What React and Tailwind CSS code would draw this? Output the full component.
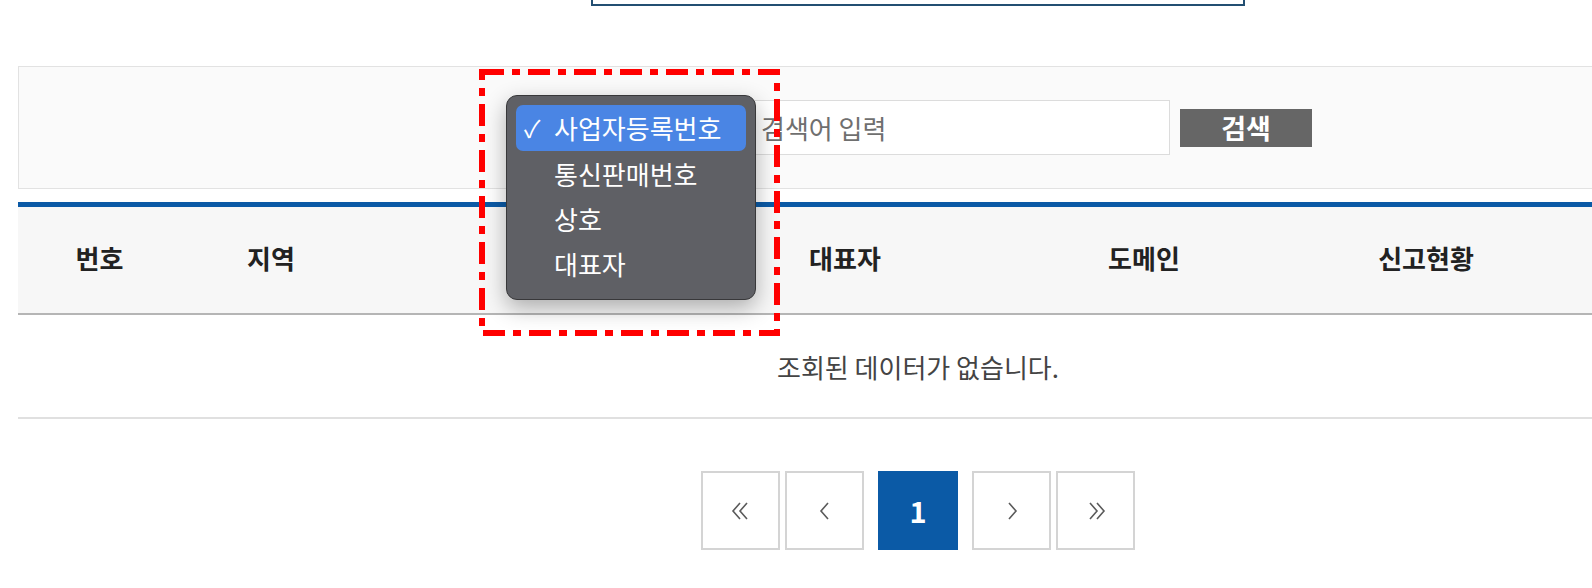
import React from "react"

const font = { fontFamily: '"Noto Sans CJK KR", "Noto Sans", sans-serif' }

const columns = [
  { label: "번호", w: "w-[163px]" },
  { label: "지역", w: "w-[180px]" },
  { label: "상호", w: "w-[355px]" },
  { label: "대표자", w: "w-[258px]" },
  { label: "도메인", w: "w-[340px]" },
  { label: "신고현황", w: "w-[224px]" },
  { label: "", w: "w-[280px]" },
]

const options = ["사업자등록번호", "통신판매번호", "상호", "대표자"]

function PageButton({ children, active }) {
  return (
    <button
      className={
        active
          ? "w-[80px] h-[79px] flex items-center justify-center bg-[#0b5aa6] text-white text-[29px] font-semibold"
          : "w-[79px] h-[79px] flex items-center justify-center border-2 border-[#d4d4d4] bg-white"
      }
    >
      {children}
    </button>
  )
}

function Chevron({ dir = "left", double }) {
  return (
    <svg width="28" height="26" viewBox="0 0 28 26" fill="none" stroke="#5a5a5a" strokeWidth="1.6">
      {double ? (
        <>
          <path d={dir === "left" ? "M13 5 L6 13 L13 21" : "M8 5 L15 13 L8 21"} />
          <path d={dir === "left" ? "M20 5 L13 13 L20 21" : "M15 5 L22 13 L15 21"} />
        </>
      ) : (
        <path d={dir === "left" ? "M17 5 L10 13 L17 21" : "M11 5 L18 13 L11 21"} />
      )}
    </svg>
  )
}

function Dropdown() {
  return (
    <div className="absolute left-[-18px] top-[-5px] w-[250px] h-[205px] rounded-[11px] bg-[#5f6065] border border-[#38383a] shadow-[0_8px_22px_rgba(0,0,0,0.3)] px-[9px] pt-[9px] flex flex-col">
      {options.map((o, i) => (
        <div
          key={o}
          className={
            i === 0
              ? "h-[46px] shrink-0 rounded-[7px] bg-[#4a85e4] flex items-center text-white text-[26px]"
              : "h-[45px] shrink-0 flex items-center text-white text-[26px]"
          }
        >
          <span className="w-[38px] pl-[8px] text-[24px] leading-none">{i === 0 ? "✓" : ""}</span>
          <span className="leading-none">{o}</span>
        </div>
      ))}
    </div>
  )
}

export default function App() {
  return (
    <div className="relative w-full h-[588px] overflow-hidden bg-white" style={font}>
      <div className="ml-[591px] w-[654px] h-[6px] border-2 border-t-0 border-[#234f72]" />

      <div className="ml-[18px] w-[1800px] mt-[60px]">
        <div className="h-[123px] border border-[#e2e2e2] bg-[#fafafa] flex items-center justify-center gap-[10px]">
          <div className="relative w-[217px] h-[55px]">
            <div className="w-full h-full border border-[#dcdcdc] bg-white" />
            <Dropdown />
          </div>
          <div className="w-[419px] h-[55px] border border-[#dcdcdc] bg-white flex items-center pl-[9px] text-[26px] text-[#6f6f6f]">
            검색어 입력
          </div>
          <button className="w-[132px] h-[38px] bg-[#666666] text-white text-[27px] font-semibold leading-none">검색</button>
        </div>

        <div className="mt-[13px] border-t-[5px] border-[#0b5aa6]">
          <div className="h-[108px] bg-[#f7f7f7] border-b-2 border-[#b5b5b5] flex">
            {columns.map((c, i) => (
              <div key={i} className={`${c.w} flex items-center justify-center pb-[5px] text-[26px] font-bold text-[#222]`}>
                {c.label}
              </div>
            ))}
          </div>
          <div className="h-[104px] border-b-2 border-[#e0e0e0] flex items-center justify-center text-[26px] text-[#444]">
            조회된 데이터가 없습니다.
          </div>
        </div>

        <div className="mt-[52px] flex items-center justify-center">
          <div className="flex gap-[5px]">
            <PageButton><Chevron dir="left" double /></PageButton>
            <PageButton><Chevron dir="left" /></PageButton>
          </div>
          <div className="mx-[14px]">
            <PageButton active>1</PageButton>
          </div>
          <div className="flex gap-[5px]">
            <PageButton><Chevron dir="right" /></PageButton>
            <PageButton><Chevron dir="right" double /></PageButton>
          </div>
        </div>
      </div>

      <svg className="absolute left-[479px] top-[69px]" width="301" height="267" viewBox="0 0 301 267" fill="none">
        <rect x="3" y="3" width="295" height="261" stroke="#ff0000" strokeWidth="6" strokeDasharray="22 8 8 8" />
      </svg>
    </div>
  )
}
